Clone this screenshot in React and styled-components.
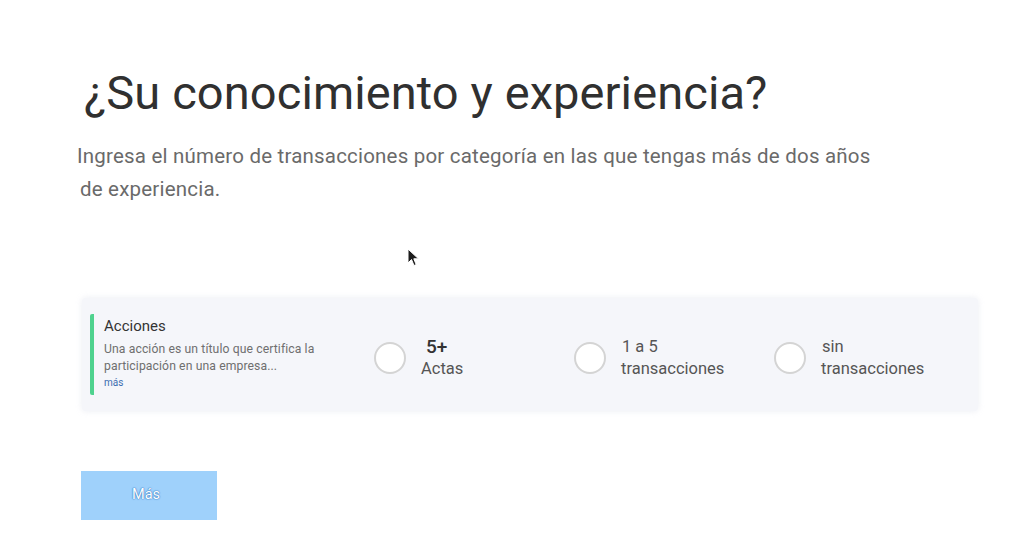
import React from "react";
import styled, { createGlobalStyle } from "styled-components";

const GlobalStyle = createGlobalStyle`
  html, body {
    margin: 0;
    padding: 0;
    background: #ffffff;
    font-family: Roboto, "Noto Sans", Arial, sans-serif;
  }
`;

const options = [
  { id: "5", top: "5+", bottom: "Actas", strong: true },
  { id: "1", top: "1 a 5", bottom: "transacciones" },
  { id: "0", top: "sin", bottom: "transacciones" },
];

const App = () => {
  return (
    <Page>
      <GlobalStyle />
      <Title>¿Su conocimiento y experiencia?</Title>
      <Intro>
        Ingresa el número de transacciones por categoría en las que tengas más de dos años
        <br />
        <IndentLine>de experiencia.</IndentLine>
      </Intro>

      <Cursor width="14" height="20" viewBox="0 0 14 20">
        <path d="M1 1 L1 15 L4.5 11.5 L7 17.5 L9.2 16.6 L6.8 10.8 L11.5 10.8 Z" fill="#1c1c1c" stroke="#ffffff" strokeWidth="1" />
      </Cursor>

      <Card>
        <Category>
          <CategoryTitle>Acciones</CategoryTitle>
          <CategoryText>
            Una acción es un título que certifica la participación en una empresa...
          </CategoryText>
          <MoreLink>más</MoreLink>
        </Category>
        <Options>
          {options.map((o) => (
            <Option key={o.id}>
              <Radio />
              <OptionLabel>
                <OptionTop strong={o.strong}>{o.top}</OptionTop>
                <span>{o.bottom}</span>
              </OptionLabel>
            </Option>
          ))}
        </Options>
      </Card>

      <NextButton>Más</NextButton>
    </Page>
  );
};

export default App;

const Page = styled.div`
  position: relative;
  width: 1024px;
  height: 551px;
  box-sizing: border-box;
  padding: 64px 20px 0 81px;
  overflow: hidden;
`;

const Title = styled.h1`
  margin: 0 0 0 3px;
  font-size: 47px;
  font-weight: 400;
  color: #303030;
  line-height: 58px;
  letter-spacing: 0.1px;
  white-space: nowrap;
`;

const Intro = styled.p`
  margin: 18px 0 0 -4px;
  font-size: 20.5px;
  line-height: 33px;
  letter-spacing: 0.2px;
  color: #6a6a6a;
  white-space: nowrap;
`;

const IndentLine = styled.span`
  margin-left: 3px;
`;

const Cursor = styled.svg`
  position: absolute;
  left: 407px;
  top: 248px;
`;

const Card = styled.div`
  margin: 92px 0 0 1px;
  width: 896px;
  height: 113px;
  background: #f5f6fa;
  border-radius: 4px;
  display: flex;
  align-items: center;
  box-shadow: 0 0 6px rgba(230, 232, 240, 0.8);
`;

const Category = styled.div`
  width: 246px;
  margin-left: 8px;
  padding: 2px 0 4px 10px;
  border-left: 4px solid #4fd28e;
  border-radius: 2px;
`;

const CategoryTitle = styled.div`
  font-size: 15px;
  color: #333333;
  line-height: 20px;
  margin-bottom: 5px;
`;

const CategoryText = styled.div`
  font-size: 12.2px;
  letter-spacing: 0.1px;
  color: #6f6f6f;
  line-height: 17px;
  width: 240px;
`;

const MoreLink = styled.div`
  font-size: 10px;
  color: #3b6db0;
  line-height: 16px;
`;

const Options = styled.div`
  display: flex;
  margin-left: 24px;
  padding-top: 6px;
`;

const Option = styled.div`
  width: 200px;
  display: flex;
  align-items: center;
  gap: 15px;
`;

const Radio = styled.div`
  width: 28px;
  height: 28px;
  border-radius: 50%;
  background: #ffffff;
  border: 2px solid #d4d4d4;
  flex-shrink: 0;
`;

const OptionLabel = styled.div`
  display: flex;
  flex-direction: column;
  font-size: 16.5px;
  color: #555555;
  line-height: 22px;
`;

const OptionTop = styled.span`
  font-size: ${(p) => (p.strong ? "19px" : "16.5px")};
  font-weight: ${(p) => (p.strong ? 500 : 400)};
  color: ${(p) => (p.strong ? "#333333" : "#555555")};
  margin-left: ${(p) => (p.strong ? "5px" : "1px")};
`;

const NextButton = styled.button`
  display: block;
  margin-top: 60px;
  width: 136px;
  height: 49px;
  padding: 0 6px 2px 0;
  border: none;
  background: #9fd1fb;
  color: #ffffff;
  font-family: Roboto, "Noto Sans", Arial, sans-serif;
  font-size: 14.5px;
  text-shadow: 0 0 1px #3d7fc6, 0 0 1px #3d7fc6, 0 0 2px #5a9ad8;
`;
